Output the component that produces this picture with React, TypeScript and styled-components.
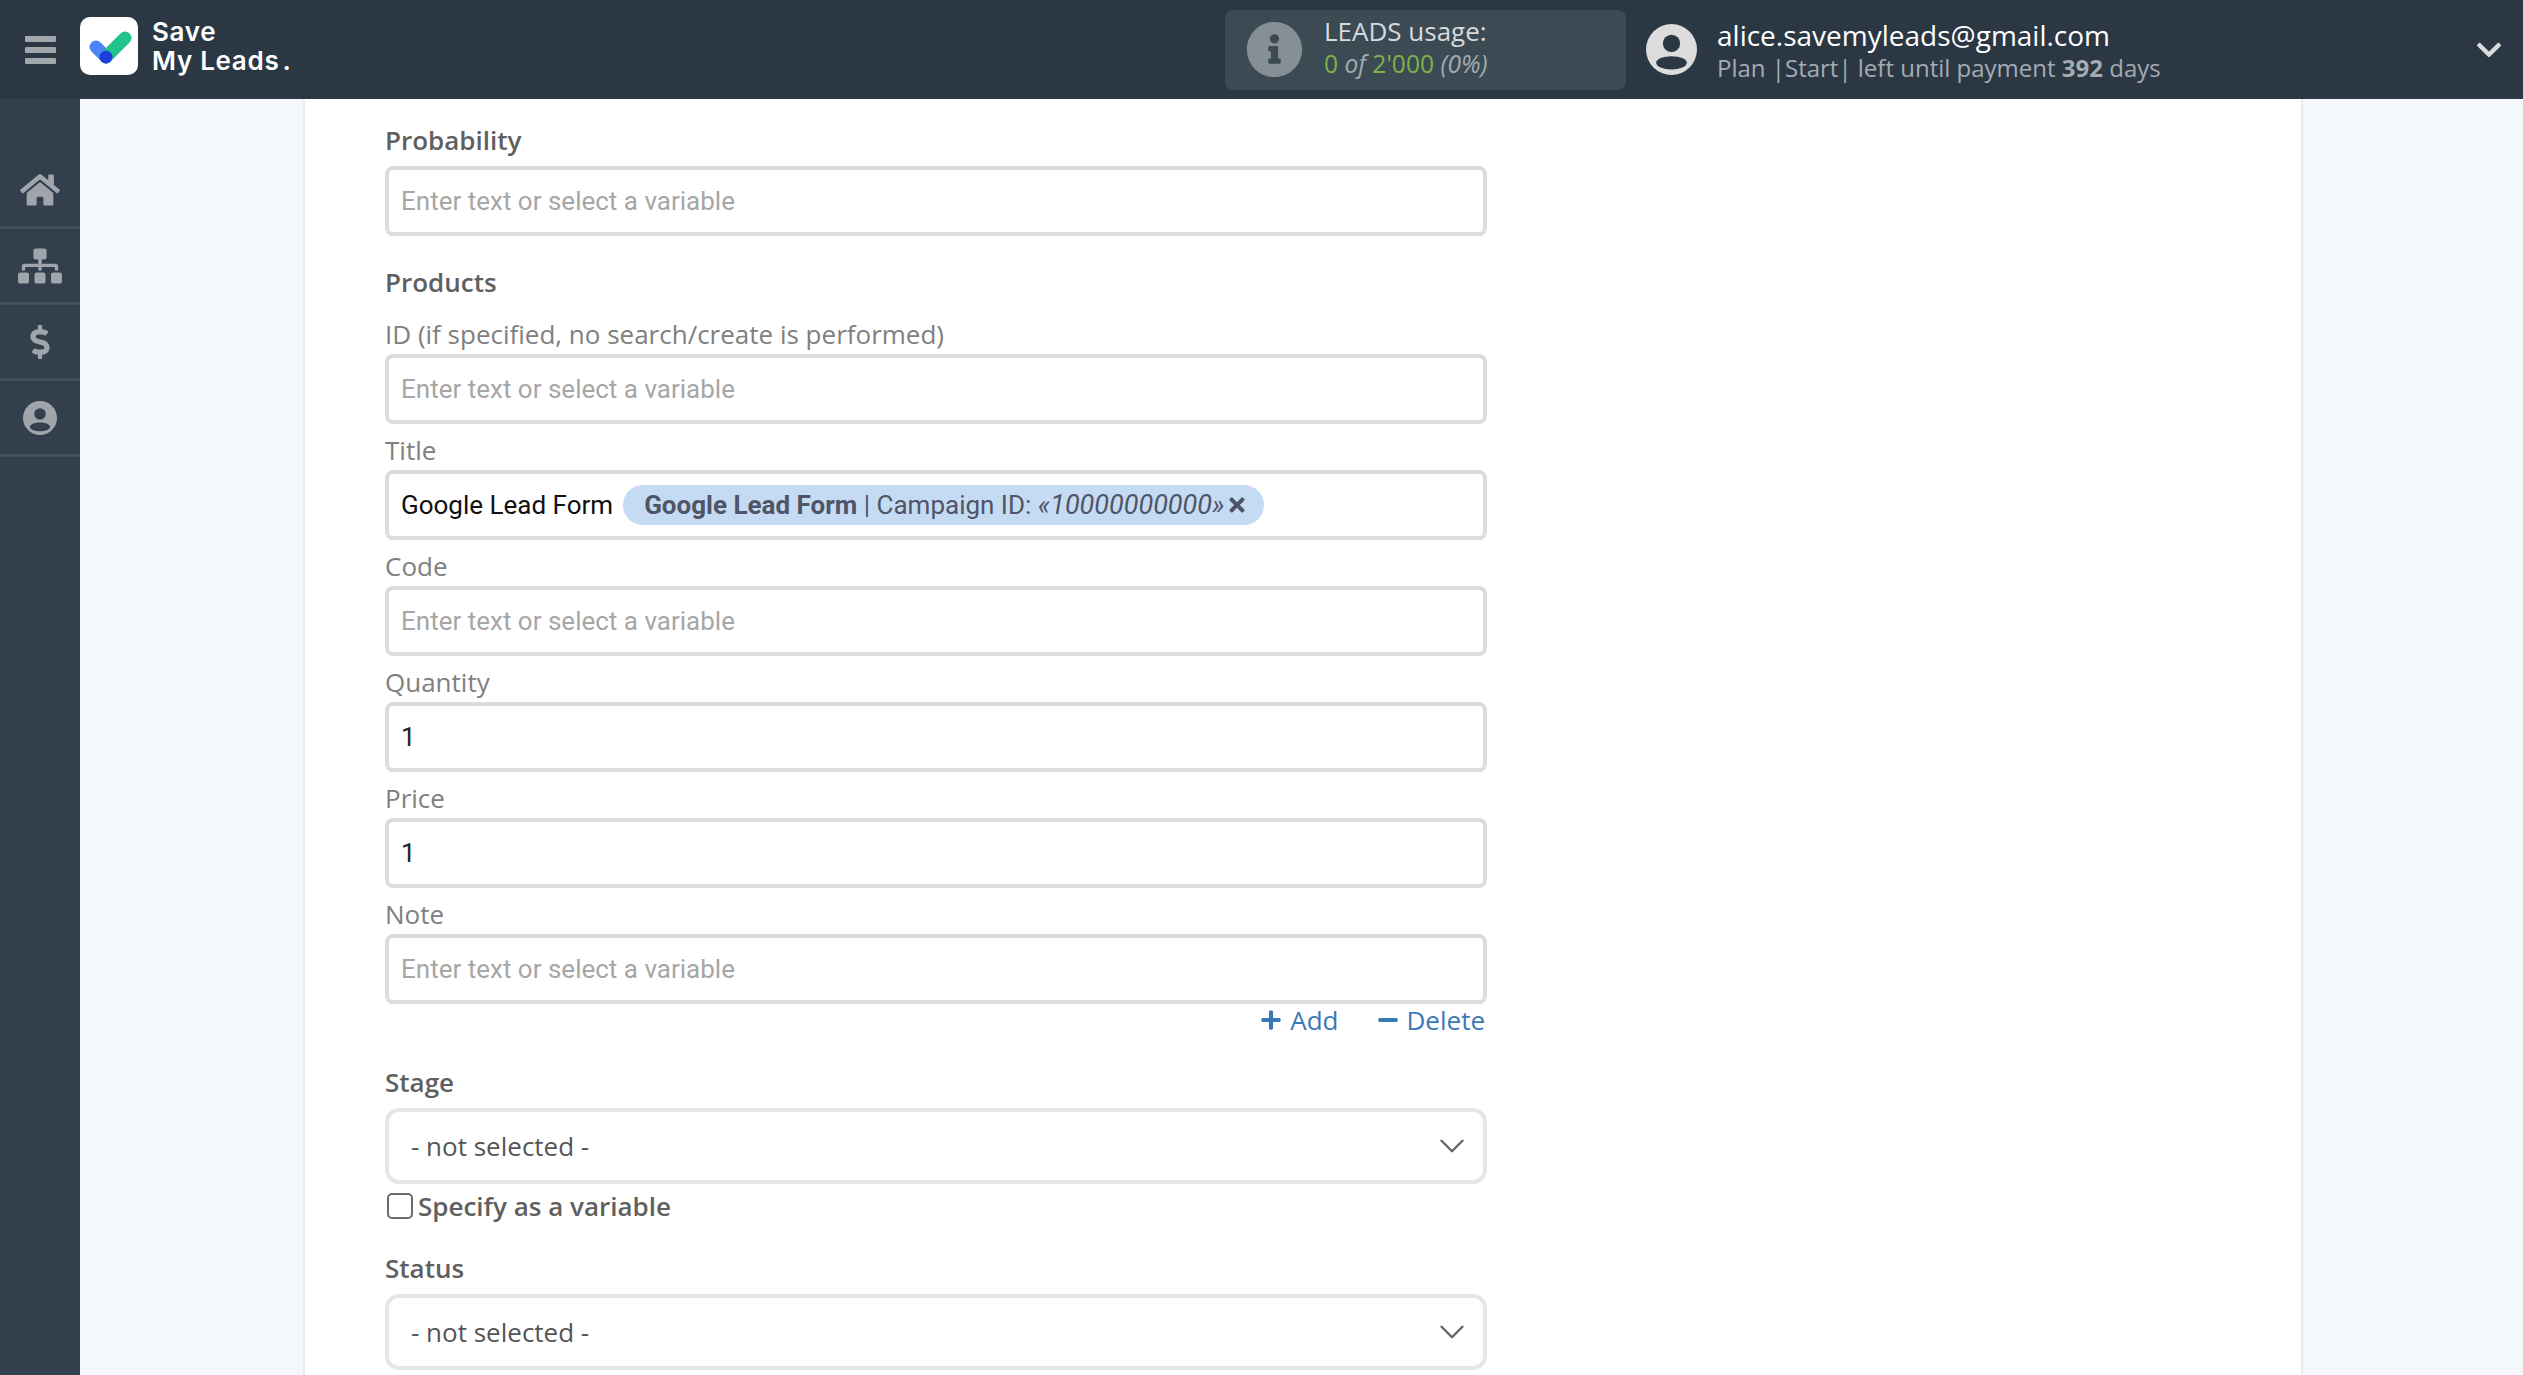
import styled, { createGlobalStyle } from 'styled-components';
import { FaChevronDown, FaDollarSign, FaHome, FaInfoCircle, FaMinus, FaPlus, FaSitemap, FaTimes } from 'react-icons/fa';
import { ChevronDown } from 'lucide-react';

const GlobalStyle = createGlobalStyle`
  html, body {
    margin: 0;
    height: 100%;
    overflow: hidden;
    background: #f4f7fc;
    font-family: "Open Sans", "Noto Sans", sans-serif;
  }
  #root { height: 100%; }
  * { box-sizing: border-box; }
`;

const Page = styled.div`
  height: 1375px;
  display: flex;
  flex-direction: column;
  overflow: hidden;
`;

const Header = styled.header`
  height: 99px;
  flex: none;
  display: flex;
  align-items: center;
  background: #2c3744;
`;

const Burger = styled.div`
  width: 80px;
  flex: none;
  display: flex;
  flex-direction: column;
  align-items: center;
  gap: 5px;
  & > span {
    width: 31px;
    height: 6px;
    border-radius: 1px;
    background: #a2a7ac;
  }
`;

const LogoBox = styled.div`
  width: 58px;
  height: 58px;
  margin-top: -8px;
  border-radius: 10px;
  background: #fff;
  flex: none;
  & > svg { display: block; }
`;

const LogoText = styled.div`
  margin: -8px 0 0 14px;
  color: #fff;
  font-family: Inter, "Open Sans", sans-serif;
  font-weight: 600;
  font-size: 26px;
  line-height: 29px;
  letter-spacing: 0.7px;
  & > span { margin-left: 3px; }
`;

const Usage = styled.div`
  margin-left: auto;
  width: 401px;
  height: 80px;
  flex: none;
  display: flex;
  align-items: center;
  padding-left: 21px;
  gap: 21px;
  border-radius: 8px;
  background: #3c4a54;
  font-size: 26px;
  color: #d6dade;
  & > svg { color: #868e96; flex: none; }
`;

const UsageText = styled.div`
  line-height: 32px;
  margin-top: -4px;
`;

const UsageCount = styled.div`
  margin-top: 1px;
  font-size: 24.6px;
  font-style: italic;
  color: #a4abb2;
  & > b { font-weight: 400; font-style: normal; color: #7fb24a; }
`;

const Account = styled.div`
  margin-left: 20px;
  width: 877px;
  flex: none;
  display: flex;
  align-items: center;
  gap: 20px;
`;

const AccountText = styled.div`
  flex: 1;
`;

const Email = styled.div`
  color: #fff;
  font-size: 28px;
  line-height: 36px;
`;

const Plan = styled.div`
  color: #a4abb2;
  font-size: 24px;
  line-height: 30px;
  & > b { font-weight: 700; }
`;

const Caret = styled.div`
  width: 68px;
  display: flex;
  justify-content: center;
  color: #dcdcdc;
`;

const Body = styled.div`
  flex: 1;
  min-height: 0;
  display: flex;
`;

const Sidebar = styled.nav`
  width: 80px;
  flex: none;
  padding-top: 54px;
  background: #343f4e;
`;

const NavItem = styled.div`
  height: 76px;
  display: flex;
  align-items: center;
  justify-content: center;
  border-bottom: 3px solid #434e5c;
  color: #a0a5ab;
`;

const Main = styled.main`
  flex: 1;
  padding: 0 220px 0 223px;
  min-width: 0;
`;

const Card = styled.div`
  height: 100%;
  background: #fff;
  border-left: 2px solid #e8ebef;
  border-right: 2px solid #e8ebef;
  padding: 22px 0 0 80px;
`;

const Form = styled.form`
  width: 1102px;
`;

const SectionLabel = styled.div<{ $top?: number }>`
  font-size: 26px;
  font-weight: 600;
  line-height: 38px;
  height: 38px;
  margin-top: ${(p) => p.$top ?? 0}px;
  margin-bottom: 7px;
  color: #5f5f5f;
`;

const FieldLabel = styled.label`
  display: flex;
  align-items: flex-end;
  height: 46px;
  padding-bottom: 1px;
  font-size: 26px;
  line-height: 38px;
  color: #808080;
`;

const TextInput = styled.input`
  display: block;
  width: 100%;
  height: 70px;
  padding: 0 12px;
  border: 4px solid #dcdcdc;
  border-radius: 8px;
  outline: none;
  background: #fff;
  font-family: Roboto, sans-serif;
  font-size: 26px;
  color: #222;
  &::placeholder { color: #a6a6a6; opacity: 1; }
`;

const TagInput = styled.div`
  height: 70px;
  display: flex;
  align-items: center;
  gap: 10px;
  padding: 0 12px;
  border: 4px solid #dcdcdc;
  border-radius: 8px;
  font-family: Roboto, sans-serif;
  font-size: 26px;
  color: #111;
`;

const Chip = styled.span`
  height: 40px;
  display: inline-flex;
  align-items: center;
  gap: 2px;
  padding: 0 16px 0 21px;
  border-radius: 20px;
  background: #c5dbf4;
  color: #4f5566;
  white-space: nowrap;
  & b { font-weight: 700; }
  & i { font-size: 27px; }
`;

const RowActions = styled.div`
  height: 32px;
  display: flex;
  justify-content: flex-end;
  align-items: center;
  gap: 38px;
  padding-right: 2px;
  font-size: 26px;
  color: #3b78b8;
`;

const ActionLink = styled.span`
  display: inline-flex;
  align-items: center;
  gap: 8px;
`;

const SelectBox = styled.div`
  height: 76px;
  display: flex;
  align-items: center;
  justify-content: space-between;
  padding: 0 10px 0 22px;
  border: 4px solid #e6e6e6;
  border-radius: 14px;
  font-size: 26px;
  color: #555;
  & > svg { color: #666; }
`;

const CheckRow = styled.label`
  height: 44px;
  margin-bottom: 21px;
  display: flex;
  align-items: center;
  gap: 5px;
  font-size: 26px;
  font-weight: 600;
  color: #5f5f5f;
`;

const CheckBox = styled.input`
  appearance: none;
  width: 26px;
  height: 26px;
  margin: 0 0 0 2px;
  border: 2px solid #6b6b6b;
  border-radius: 5px;
  background: #fff;
`;

const Spacer = styled.div`
  height: 27px;
`;

const Logo = () => (
  <svg width="58" height="58" viewBox="0 0 58 58">
    <path d="M16 30 L26 40" stroke="#4c83fb" strokeWidth="13" strokeLinecap="round" />
    <path d="M26 40 L45 21" stroke="#22c48b" strokeWidth="13" strokeLinecap="round" />
    <circle cx="26" cy="40" r="6.5" fill="#1b3fd8" />
  </svg>
);

type UserGlyphProps = { size: number; fill: string; hole: string };

const UserGlyph = ({ size, fill, hole }: UserGlyphProps) => (
  <svg width={size} height={size} viewBox="0 0 50 50" style={{ flex: 'none' }}>
    <circle cx="25" cy="25" r="25" fill={fill} />
    <circle cx="25" cy="19" r="8.5" fill={hole} />
    <ellipse cx="25" cy="38" rx="15" ry="6.5" fill={hole} />
  </svg>
);

type FieldProps = { label: string; value?: string };

const Field = ({ label, value }: FieldProps) => (
  <div>
    <FieldLabel>{label}</FieldLabel>
    <TextInput readOnly value={value} placeholder="Enter text or select a variable" />
  </div>
);

const Select = () => (
  <SelectBox>
    - not selected -
    <ChevronDown size={42} strokeWidth={1.4} />
  </SelectBox>
);

export default function App() {
  return (
    <Page>
      <GlobalStyle />
      <Header>
        <Burger>
          <span />
          <span />
          <span />
        </Burger>
        <LogoBox>
          <Logo />
        </LogoBox>
        <LogoText>
          Save
          <br />
          My Leads<span>.</span>
        </LogoText>
        <Usage>
          <FaInfoCircle size={57} />
          <UsageText>
            LEADS usage:
            <UsageCount>
              <b>0</b> of <b>2'000</b> (0%)
            </UsageCount>
          </UsageText>
        </Usage>
        <Account>
          <UserGlyph size={51} fill="#dcdcdc" hole="#2c3744" />
          <AccountText>
            <Email>alice.savemyleads@gmail.com</Email>
            <Plan>
              Plan |Start| left until payment <b>392</b> days
            </Plan>
          </AccountText>
          <Caret>
            <FaChevronDown size={28} />
          </Caret>
        </Account>
      </Header>
      <Body>
        <Sidebar>
          <NavItem>
            <FaHome size={40} />
          </NavItem>
          <NavItem>
            <FaSitemap size={44} />
          </NavItem>
          <NavItem>
            <FaDollarSign size={34} />
          </NavItem>
          <NavItem>
            <UserGlyph size={34} fill="#a0a5ab" hole="#343f4e" />
          </NavItem>
        </Sidebar>
        <Main>
          <Card>
            <Form>
              <SectionLabel>Probability</SectionLabel>
              <TextInput readOnly placeholder="Enter text or select a variable" />
              <Spacer />
              <SectionLabel>Products</SectionLabel>
              <Field label="ID (if specified, no search/create is performed)" />
              <div>
                <FieldLabel>Title</FieldLabel>
                <TagInput>
                  Google Lead Form
                  <Chip>
                    <span>
                      <b>Google Lead Form</b> | Campaign ID: <i>«10000000000»</i>
                    </span>
                    <FaTimes size={22} />
                  </Chip>
                </TagInput>
              </div>
              <Field label="Code" />
              <Field label="Quantity" value="1" />
              <Field label="Price" value="1" />
              <Field label="Note" />
              <RowActions>
                <ActionLink>
                  <FaPlus size={22} />
                  Add
                </ActionLink>
                <ActionLink>
                  <FaMinus size={22} />
                  Delete
                </ActionLink>
              </RowActions>
              <SectionLabel $top={27}>Stage</SectionLabel>
              <Select />
              <CheckRow>
                <CheckBox type="checkbox" />
                Specify as a variable
              </CheckRow>
              <SectionLabel>Status</SectionLabel>
              <Select />
            </Form>
          </Card>
        </Main>
      </Body>
    </Page>
  );
}
